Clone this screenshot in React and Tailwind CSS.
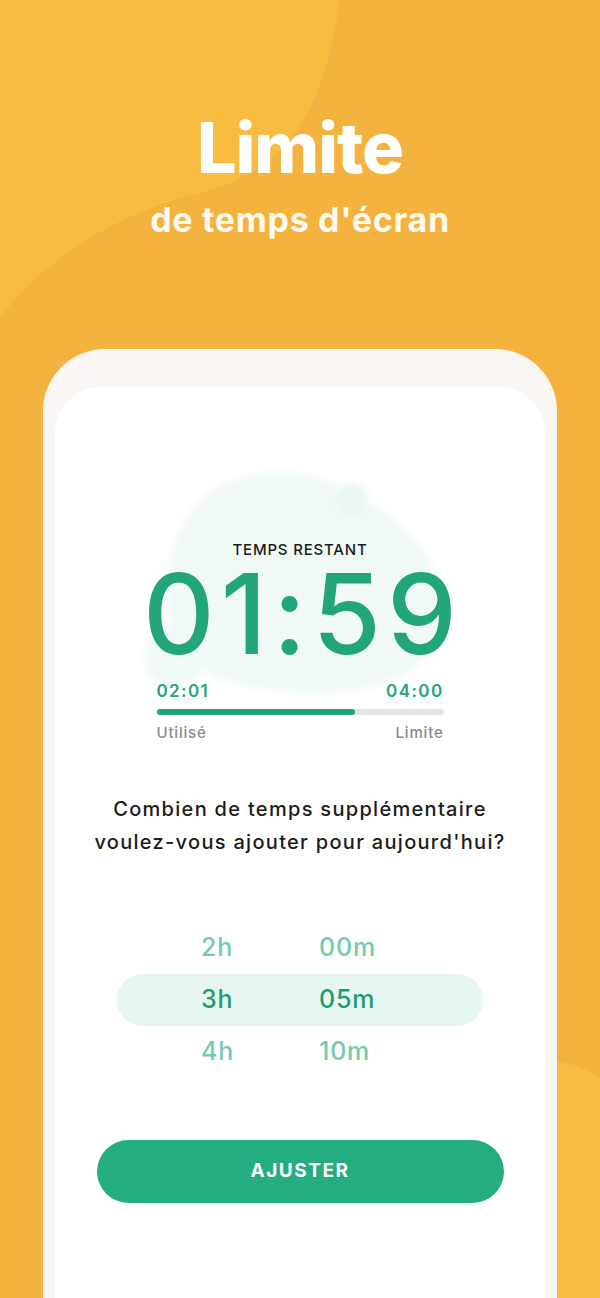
import React from 'react';

// Screen time limit promo screen

const hours = ['2h', '3h', '4h'];
const minutes = ['00m', '05m', '10m'];

function Background() {
  return (
    <svg className="absolute inset-0 w-full h-full" viewBox="0 0 600 1298" preserveAspectRatio="none">
      <rect width="600" height="1298" fill="#F4B23F" />
      <path
        d="M0 0 L340 0 C330 70 310 130 268 161 C240 182 215 190 191 195 C140 210 60 240 0 318 Z"
        fill="#F8BC41"
      />
      <path
        d="M540 1058 C570 1062 590 1070 600 1078 L600 1298 L520 1298 Z"
        fill="#F8BC42"
      />
    </svg>
  );
}

function GreenBlob() {
  return (
    <svg className="absolute left-[90px] top-[70px] blur-[3px]" width="320" height="250" viewBox="0 0 320 250">
      <path
        d="M45 55 C75 10 155 5 200 32 C230 50 260 62 283 100 C305 140 300 192 262 216 C215 245 140 238 95 228 C50 218 25 190 22 150 C20 112 28 80 45 55 Z"
        fill="#F1F9F6"
      />
      <circle cx="207" cy="42" r="16" fill="#EAF6F1" />
      <circle cx="28" cy="200" r="30" fill="#F1F9F6" />
    </svg>
  );
}

export default function App() {
  return (
    <div className="relative w-full h-[1298px] overflow-hidden flex flex-col font-['Inter',sans-serif]">
      <Background />

      {/* Header */}
      <div className="relative flex flex-col items-center pt-[113px] text-white">
        <h1 className="text-[70px] leading-[70px] font-extrabold tracking-[-1px]">Limite</h1>
        <p className="mt-[20px] text-[34px] leading-[34px] font-bold text-[#FFF9EF] tracking-[0.7px]">de temps d'écran</p>
      </div>

      {/* Phone frame */}
      <div className="relative mt-[112px] mx-[43px] flex-1 rounded-t-[62px] bg-[#F9F6F4] px-[12px] pt-[38px]">
        <div className="relative h-full rounded-t-[46px] bg-white flex flex-col items-center">
          <GreenBlob />

          <div className="relative mt-[154px] text-[15px] leading-[18px] font-medium text-[#1b1b1b] tracking-[0.8px]">
            TEMPS RESTANT
          </div>
          <div className="relative mt-[13px] text-[111px] leading-[84px] font-medium text-[#22A679] tracking-[6px] pl-[6px]">
            01:59
          </div>

          <div className="relative w-[287px] mt-[25px]">
            <div className="flex justify-between text-[17px] leading-[20px] font-semibold text-[#22A679] tracking-[1.4px]">
              <span>02:01</span>
              <span>04:00</span>
            </div>
            <div className="mt-[8px] h-[6px] rounded-full bg-[#E3E3E3]">
              <div className="h-full w-[69%] rounded-full bg-[#22A679]" />
            </div>
            <div className="mt-[9px] flex justify-between text-[15px] leading-[18px] font-medium text-[#8A8A8A] tracking-[0.8px]">
              <span>Utilisé</span>
              <span>Limite</span>
            </div>
          </div>

          <p className="relative mt-[51px] text-center text-[20px] leading-[33px] font-medium text-[#1c1c1c] tracking-[1.3px]">
            Combien de temps supplémentaire
            <br />
            voulez-vous ajouter pour aujourd'hui?
          </p>

          {/* Picker */}
          <div className="relative mt-[63px] w-[366px]">
            {[0, 1, 2].map((i) => (
              <div
                key={i}
                className={
                  'flex items-center h-[52px] pl-[84px] text-[25px] font-medium tracking-[0.8px] ' +
                  (i === 1 ? 'rounded-full bg-[#E8F6F1] text-[#1E9E6E]' : 'text-[#74CBAA]')
                }
              >
                <span className="w-[118px]">{hours[i]}</span>
                <span>{minutes[i]}</span>
              </div>
            ))}
          </div>

          <button className="relative mt-[62px] w-[407px] h-[63px] rounded-full bg-[#23AD80] text-white text-[19px] font-bold tracking-[1.5px]">
            AJUSTER
          </button>
        </div>
      </div>
    </div>
  );
}
